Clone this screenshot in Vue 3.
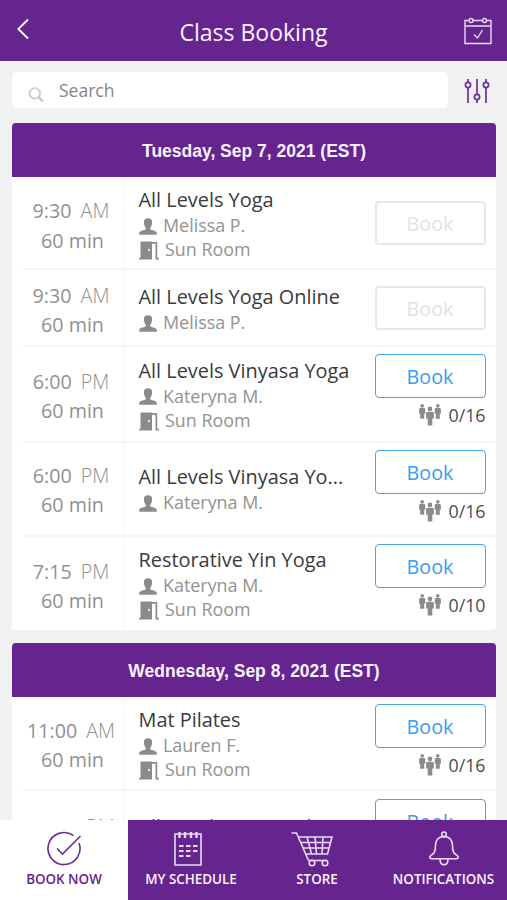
<script setup>
const days = [
  {
    label: 'Tuesday, Sep 7, 2021 (EST)',
    classes: [
      { time: '9:30', half: 'AM', title: 'All Levels Yoga', teacher: 'Melissa P.', room: 'Sun Room', size: 'closed-tall' },
      { time: '9:30', half: 'AM', title: 'All Levels Yoga Online', teacher: 'Melissa P.', size: 'closed-short' },
      { time: '6:00', half: 'PM', title: 'All Levels Vinyasa Yoga', teacher: 'Kateryna M.', room: 'Sun Room', spots: '0/16', size: 'open-tall' },
      { time: '6:00', half: 'PM', title: 'All Levels Vinyasa Yo...', teacher: 'Kateryna M.', spots: '0/16', size: 'open-short' },
      { time: '7:15', half: 'PM', title: 'Restorative Yin Yoga', teacher: 'Kateryna M.', room: 'Sun Room', spots: '0/10', size: 'open-last' },
    ],
  },
  {
    label: 'Wednesday, Sep 8, 2021 (EST)',
    classes: [
      { time: '11:00', half: 'AM', title: 'Mat Pilates', teacher: 'Lauren F.', room: 'Sun Room', spots: '0/16', size: 'open-first' },
      { time: '12:00', half: 'PM', title: 'All Levels Yoga Online', teacher: 'Lauren F.', spots: '0/16', size: 'open-next' },
    ],
  },
]
</script>

<template>
  <div class="app">
    <header class="topbar">
      <svg class="back" width="14" height="22" viewBox="0 0 14 22"><path d="M12 1.500 2.300 11l9.700 9.500" /></svg>
      <h1>Class Booking</h1>
      <svg class="calendar" width="28" height="28" viewBox="0 0 28 28">
        <path d="M4.500 3.500H1v23h26v-23h-4M9 3.500h9.500M1 9h26M10 17.500l3.500 3.500L18.500 13" />
        <circle cx="7" cy="3.500" r="2" /><circle cx="20.500" cy="3.500" r="2" />
      </svg>
    </header>

    <div class="tools">
      <div class="search">
        <svg width="17" height="17" viewBox="0 0 17 17"><circle cx="6.800" cy="6.300" r="5.300" /><path class="handle" d="m10.800 10.300 4 4" /></svg>
        <span>Search</span>
      </div>
      <svg class="filter" width="26" height="26" viewBox="0 0 26 26">
        <path d="M4 1v3.500M4 9.500V25M13 1v15.500M13 21.500V25M22 1v3.500M22 9.500V25" />
        <circle cx="4" cy="7" r="2.600" /><circle cx="13" cy="19" r="2.600" /><circle cx="22" cy="7" r="2.600" />
      </svg>
    </div>

    <main class="list">
      <section v-for="day in days" :key="day.label" class="day">
        <h2>{{ day.label }}</h2>
        <div v-for="(c, i) in day.classes" :key="i" class="row" :class="c.size">
          <div class="when">
            <div>{{ c.time }}<span class="half">{{ c.half }}</span></div>
            <div>60 min</div>
          </div>
          <div class="info">
            <div class="title">{{ c.title }}</div>
            <div class="line">
              <svg width="18" height="17" viewBox="0 0 18 17"><path d="M9 .3c2.700 0 4.100 1.300 4.100 3.700 0 2.900-.8 4.800-2 5.900v1.400c1 1 6.400 1.500 6.700 3.400V16.700H.2V14.700c.3-1.900 5.700-2.400 6.700-3.400V9.900c-1.200-1.100-2-3-2-5.900C4.900 1.600 6.300.3 9 .3Z" /></svg>
              <span>{{ c.teacher }}</span>
            </div>
            <div v-if="c.room" class="line room">
              <svg width="20" height="19" viewBox="0 0 20 19"><path fill-rule="evenodd" d="M1.500.5H13V18.500H0V16.800H1.500ZM10 8a1.100 1.100 0 1 0 0 2.200A1.100 1.100 0 1 0 10 8ZM13 1h5.200V16.800H20v1.700h-3.500V2.800H13Z" /></svg>
              <span>{{ c.room }}</span>
            </div>
          </div>
          <div class="action">
            <button :disabled="!c.spots">Book</button>
            <div v-if="c.spots" class="spots">
              <svg width="22" height="22" viewBox="0 0 22 22">
                <circle cx="3.200" cy="1.900" r="1.800" /><path d="M1.500 4.100h3.400q1.400 0 1.400 1.400v4.300H5.200v5H1.200v-5H.1V5.500q0-1.400 1.400-1.400Z" />
                <circle cx="18.800" cy="1.900" r="1.800" /><path d="M17.100 4.100h3.400q1.400 0 1.400 1.400v4.300h-1.100v5h-4v-5h-1.100V5.500q0-1.400 1.400-1.400Z" />
                <circle cx="11" cy="4.900" r="2.300" /><path d="M8.700 7.700h4.600q1.600 0 1.600 1.600v5.200h-1.600v7H8.700v-7H7.100V9.300q0-1.600 1.600-1.600Z" />
              </svg>
              <span>{{ c.spots }}</span>
            </div>
          </div>
        </div>
      </section>
    </main>

    <nav class="tabs">
      <a class="tab active">
        <svg width="36" height="36" viewBox="0 0 36 36"><path d="M27.500 4.700A16 16 0 1 0 33 12M11 17.500l5.500 5.500L34.500 5" /></svg>
        <span>BOOK NOW</span>
      </a>
      <a class="tab schedule">
        <svg width="28" height="36" viewBox="0 0 28 36">
          <path d="M1 3h26v31H1Z" />
          <path class="rings" d="M5.500 1v6M11 1v6M17 1v6M22.500 1v6" />
          <path class="dashes" d="M5 15h4.500M12 15h4.500M19 15h4.500M5 20h4.500M12 20h4.500M19 20h4.500M5 25h4.500M12 25h4.500" />
        </svg>
        <span>MY SCHEDULE</span>
      </a>
      <a class="tab store">
        <svg width="42" height="36" viewBox="0 0 42 36">
          <path d="M-.5 2h5l12 27.500M6.500 6H40l-4.500 17H14M9 11.500H38.500M11.500 17H37M15 6l4.500 17M23 6l1.500 17M31 6l-1 17M16.500 29.500h19" />
          <circle cx="20" cy="32" r="2.800" /><circle cx="33" cy="32" r="2.800" />
        </svg>
        <span>STORE</span>
      </a>
      <a class="tab bell">
        <svg width="30" height="36" viewBox="0 0 30 36">
          <circle cx="15" cy="3.300" r="2.300" />
          <path d="M15 5.600C9 5.600 6.500 10 6.500 14.500c0 7-1.500 8-4.800 10.200-1.500 1.200-1 3 1 3h24.600c2 0 2.500-1.800 1-3-3.300-2.200-4.800-3.200-4.800-10.200C23.500 10 21 5.600 15 5.600ZM11 27.700c0 8 8 8 8 0" />
        </svg>
        <span>NOTIFICATIONS</span>
      </a>
    </nav>
  </div>
</template>

<style>
body { overflow: hidden; }
</style>

<style scoped>
.app {
  width: 507px;
  height: 900px;
  display: flex;
  flex-direction: column;
  background: #f1f1f1;
  font-family: "Open Sans", "Noto Sans", sans-serif;
  color: #333;
  overflow: hidden;
}
svg { display: block; flex: none; }
.topbar {
  flex: none;
  height: 61px;
  box-sizing: border-box;
  display: grid;
  grid-template-columns: 48px 1fr 48px;
  background: #66248f;
}
.topbar svg { fill: none; stroke: #eadcf3; stroke-width: 1.4; }
.topbar .back { margin: 18px 0 0 16px; stroke: #fff; stroke-width: 1.8; }
.topbar .calendar { margin: 17px 0 0 5px; }
h1 {
  margin: 3px 0 0;
  text-align: center;
  font-size: 23px;
  line-height: 58px;
  font-weight: 400;
  color: #fbf3ff;
}
.tools {
  flex: none;
  height: 62px;
  display: flex;
  box-sizing: border-box;
  padding: 11px 0 0 12px;
}
.search {
  width: 436px;
  height: 36px;
  border-radius: 5px;
  background: #fff;
  display: flex;
  font-size: 17.500px;
  line-height: 36px;
  color: #858585;
}
.search svg { margin: 15px 14px 0 16px; fill: none; stroke: #c8c8c8; stroke-width: 1.7; }
.search .handle { stroke-width: 2.600; }
.filter { margin: 6px 0 0 16px; fill: none; stroke: #6c3193; stroke-width: 1.7; }
.list { flex: 1; min-height: 0; overflow: hidden; padding: 0 11px 0 12px; }
.day { background: #fff; border-radius: 4px; overflow: hidden; margin-bottom: 13px; }
h2 {
  margin: 0;
  height: 54px;
  line-height: 57px;
  background: #66248f;
  color: #fbf3ff;
  text-align: center;
  font-family: "Liberation Sans", sans-serif;
  font-size: 17.500px;
  font-weight: 700;
}
.row {
  display: grid;
  grid-template-columns: 102px 249.500px 111px;
  margin-left: 11px;
  box-sizing: border-box;
  border-bottom: 2px solid #f4f5f5;
  height: 94px;
}
.when {
  border-right: 1px solid #f4f5f5;
  padding: 17.500px 2px 0 0;
  font-size: 19.700px;
  line-height: 29.500px;
  color: #919191;
  text-align: center;
  white-space: nowrap;
}
.half { font-weight: 300; margin: 0 3px 0 9px; }
.info { padding: 9px 0 0 13.500px; white-space: nowrap; }
.title { font-size: 19.900px; line-height: 27px; color: #3a3a3a; }
.line { display: flex; height: 24.200px; align-items: center; font-size: 17.900px; line-height: 24px; color: #929292; }
.line svg { margin: 2px 6.500px 0 0; fill: #8b8b8b; }
.line.room svg { margin-top: 3px; }
.action { padding-top: 7px; }
button {
  display: block;
  width: 111px;
  height: 44px;
  padding: 1px 0 0;
  box-sizing: border-box;
  border: 1.500px solid #45a5e8;
  border-radius: 4px;
  background: #fff;
  color: #36a0e9;
  font-family: inherit;
  font-size: 19.800px;
}
button:disabled { border-color: #e8e8e8; color: #e2e2e2; border-width: 2px; }
.spots {
  display: flex;
  justify-content: flex-end;
  gap: 7px;
  padding-top: 5px;
  font-size: 17.800px;
  line-height: 24px;
  color: #4c4c4c;
}
.spots svg { margin-top: 1px; fill: #8b8b8b; }
.closed-tall { height: 93px; }
.closed-tall .when { padding-top: 19px; }
.closed-tall .action { padding-top: 24px; }
.closed-short { height: 77px; }
.closed-short .when { padding-top: 10.500px; }
.closed-short .info { padding-top: 13px; }
.closed-short .action { padding-top: 16px; }
.open-tall { height: 96px; }
.open-tall .when, .open-last .when { padding-top: 19.500px; }
.open-tall .info { padding-top: 9.500px; }
.open-short .info { padding-top: 20px; }
.open-last { height: 93px; border-bottom: 0; }
.open-first .when { padding-top: 18.500px; }
.open-next .when { padding-top: 21px; }
.open-next .info { padding-top: 22px; }
.open-next .action { padding-top: 8px; }
.tabs {
  flex: none;
  height: 80px;
  display: grid;
  grid-template-columns: 128px 126px 126px 127px;
  background: #66248f;
}
.tab {
  display: flex;
  flex-direction: column;
  align-items: center;
  padding-top: 11px;
  gap: 3px;
  color: #fbf3ff;
  font-size: 13.400px;
  line-height: 18px;
  font-weight: 600;
  white-space: nowrap;
}
.tab svg { fill: none; stroke: #ecd9f6; stroke-width: 1.6; }
.tab.schedule svg { margin-right: 7px; }
.tab.store svg { margin-right: 8px; overflow: visible; }
.tab.active { background: #fff; color: #66248f; }
.tab.active svg { stroke: #6c2d94; }
.tab .rings { stroke-width: 2.400; }
.tab .dashes { stroke-width: 2; }
</style>
